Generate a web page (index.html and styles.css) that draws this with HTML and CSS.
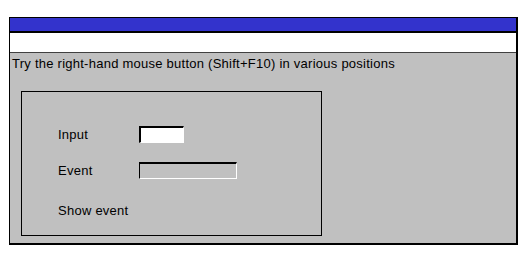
FILE: index.html
```html
<!DOCTYPE html>
<html lang="en">
<head>
    <meta charset="UTF-8">
    <title>Popup menu</title>
    <link rel="stylesheet" href="styles.css">
</head>
<body>
    <div class="window">
        <div class="titlebar"></div>
        <div class="menubar"></div>
        <div class="content">
            <div class="hint">Try the right-hand mouse button (Shift+F10) in various positions</div>
            <div class="group">
                <div class="row">
                    <span class="label">Input</span>
                    <input type="text" class="field input-field">
                </div>
                <div class="row">
                    <span class="label">Event</span>
                    <div class="field event-field"></div>
                </div>
                <div class="row show-row">
                    <span class="label">Show event</span>
                </div>
            </div>
        </div>
    </div>
</body>
</html>
```

FILE: styles.css
```css
body { margin: 0; background: #fff; font-family: "Liberation Sans", Arial, sans-serif; font-size: 13px; letter-spacing: 0.25px; color: #000; }
.window { margin: 17px 0 0 9px; width: 506px; border: 1px solid #000; border-right-width: 2px; border-bottom-width: 2px; }
.titlebar { height: 13px; background: #3333cc; border-bottom: 2px solid #000; }
.menubar { height: 19px; background: #fff; border-bottom: 1px solid #404040; }
.content { background: #c0c0c0; height: 190px; padding: 3px 0 0 2px; box-sizing: border-box; }
.hint { height: 15px; line-height: 15px; }
.group { margin: 20px 0 0 9px; width: 301px; height: 145px; border: 1px solid #000; padding: 34px 0 0 36px; box-sizing: border-box; display: flex; flex-direction: column; gap: 19px; }
.row { display: flex; align-items: center; height: 17px; }
.show-row { margin-top: 4px; }
.label { width: 81px; }
.field { box-sizing: border-box; height: 17px; border-style: solid; border-color: #000 #fff #fff #000; }
.input-field { width: 45px; border-width: 2px 1px 1px 2px; background: #fff; padding: 0; font: inherit; }
.event-field { width: 98px; border-width: 2px 1px 1px 1px; background: #c0c0c0; }
```
